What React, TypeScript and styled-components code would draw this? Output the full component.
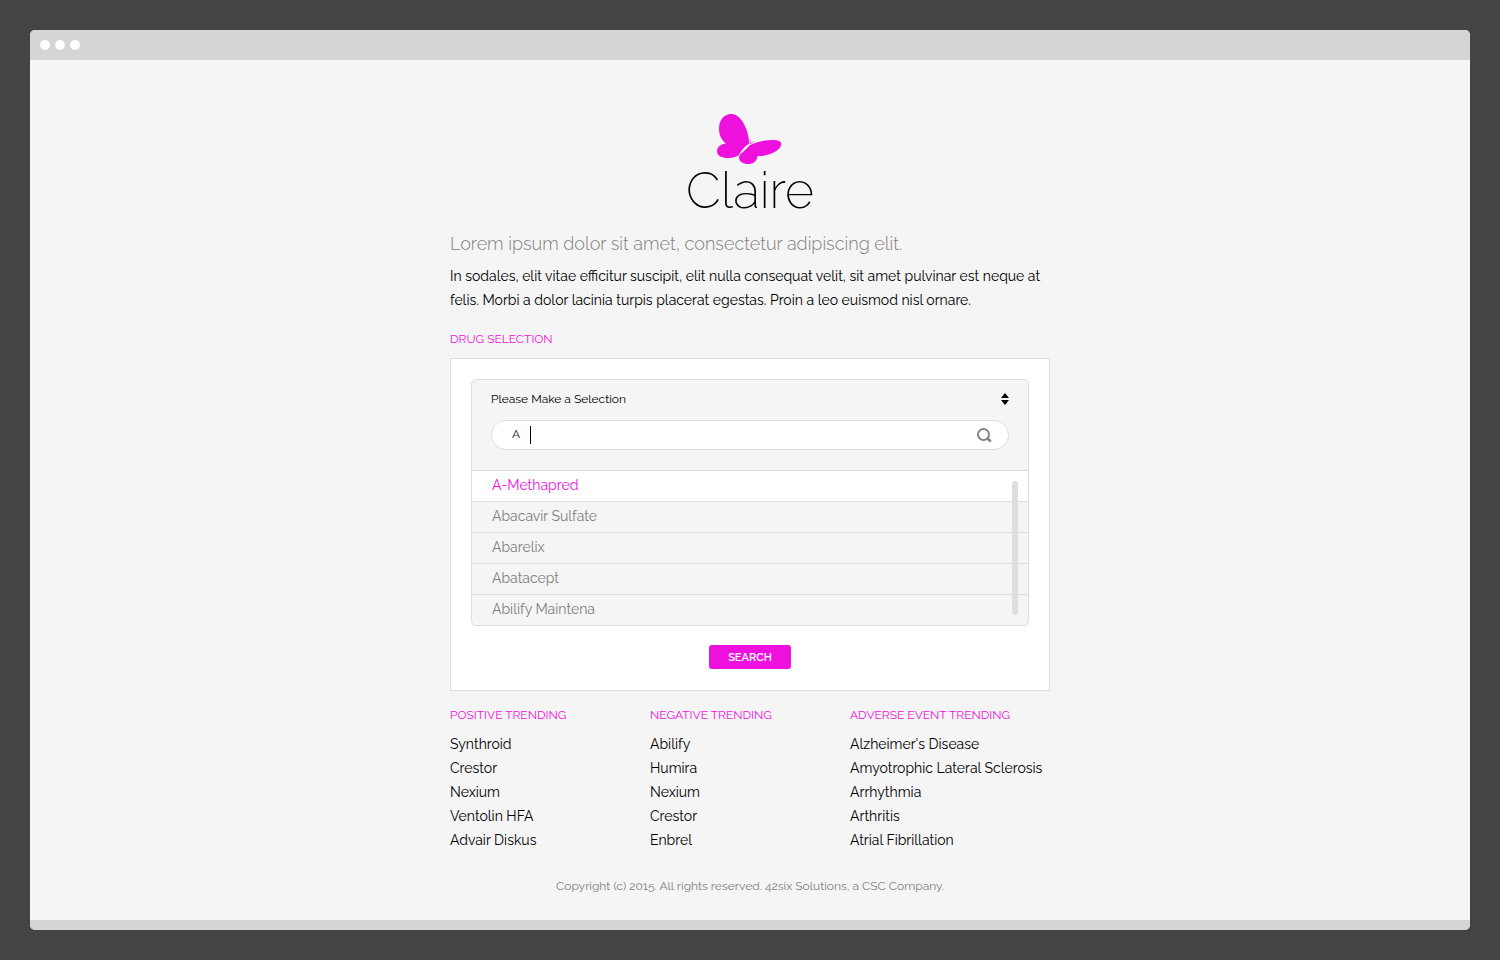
import React, { useState } from "react";
import styled, { createGlobalStyle } from "styled-components";

const pink = "#ee11dd";
const line = "#dedede";
const paper = "#f5f5f5";

const GlobalStyle = createGlobalStyle`
  *, *::before, *::after { box-sizing: border-box; }
  body {
    margin: 0;
    background: #444444;
    color: #000000;
    font-family: Raleway, Lato, sans-serif;
    font-size: 14px;
    line-height: 24px;
  }
  h1, h2, p, ul { margin: 0; padding: 0; }
  ul { list-style: none; }
  input, select, button { font-family: inherit; margin: 0; }
`;

const Desktop = styled.div`
  min-height: 100vh;
  padding: 30px;
  display: flex;
`;

const BrowserWindow = styled.div`
  flex: 1;
  display: flex;
  flex-direction: column;
  border-radius: 5px;
  overflow: hidden;
  background: ${paper};
`;

const TitleBar = styled.div`
  height: 30px;
  padding: 0 10px;
  display: flex;
  align-items: center;
  gap: 5px;
  background: #d5d5d5;
`;

const Dot = styled.span`
  width: 10px;
  height: 10px;
  border-radius: 50%;
  background: #ffffff;
`;

const BottomBar = styled.div`
  height: 10px;
  background: #d5d5d5;
`;

const Page = styled.main`
  flex: 1;
  width: 100%;
  max-width: 640px;
  margin: 0 auto;
  padding: 54px 20px 22px;
`;

const Brand = styled.header`
  display: flex;
  flex-direction: column;
  align-items: center;
  margin-bottom: 14px;
`;

const Butterfly = styled.svg`
  display: block;
  width: 66px;
  height: 50px;
  fill: ${pink};
`;

const BrandName = styled.h1`
  font-size: 50px;
  line-height: 54px;
  font-weight: 200;
`;

const Lead = styled.h2`
  margin-bottom: 8px;
  font-size: 18px;
  line-height: 24px;
  font-weight: 300;
  color: #808080;
`;

const Heading = styled.h2`
  font-size: 12px;
  line-height: 24px;
  font-weight: 400;
  text-transform: uppercase;
  color: ${pink};
`;

const FieldLabel = styled(Heading).attrs({ as: "label" })<{ htmlFor?: string }>`
  display: block;
  margin-top: 15px;
`;

const DrugForm = styled.form`
  margin: 7px 0 12px;
  padding: 20px 20px 21px;
  background: #ffffff;
  border: 1px solid ${line};
`;

const Picker = styled.div`
  margin-bottom: 19px;
  background: ${paper};
  border: 1px solid ${line};
  border-radius: 5px;
  overflow: hidden;
`;

const PickerHead = styled.div`
  padding: 10px 19px 20px;
  display: flex;
  flex-direction: column;
  gap: 10px;
`;

const SelectRow = styled.div`
  display: flex;
  position: relative;
`;

const DrugSelect = styled.select`
  appearance: none;
  flex: 1;
  height: 20px;
  padding: 0 0 2px;
  border: 0;
  background: transparent;
  font-size: 12px;
  line-height: 18px;
  color: #000000;
`;

const SortIcon = styled.svg`
  position: absolute;
  right: 0;
  top: 3px;
  width: 8px;
  height: 12px;
  pointer-events: none;
`;

const SearchField = styled.div`
  position: relative;
  display: flex;
  align-items: center;
  height: 30px;
  padding: 0 16px 0 20px;
  background: #ffffff;
  border: 1px solid ${line};
  border-radius: 15px;
`;

const SearchInput = styled.input`
  flex: 1;
  min-width: 0;
  height: 24px;
  padding: 0 0 2px;
  border: 0;
  outline: 0;
  background: transparent;
  font-size: 12px;
  color: #222222;
`;

const Caret = styled.span`
  position: absolute;
  left: 38px;
  top: 5px;
  width: 1px;
  height: 18px;
  background: #000000;
`;

const SearchIcon = styled.svg`
  width: 15px;
  height: 15px;
  fill: none;
  stroke: #858585;
`;

const ResultsArea = styled.div`
  position: relative;
`;

const Result = styled.li<{ $active: boolean }>`
  height: 31px;
  padding: 0 20px;
  border-top: 1px solid ${line};
  line-height: 28px;
  cursor: pointer;
  background: ${(p) => (p.$active ? "#ffffff" : "transparent")};
  color: ${(p) => (p.$active ? pink : "#808080")};
`;

const ScrollThumb = styled.div`
  position: absolute;
  top: 11px;
  bottom: 10px;
  right: 10px;
  width: 6px;
  border-radius: 3px;
  background: ${line};
`;

const SearchButton = styled.button`
  display: block;
  width: 82px;
  height: 24px;
  margin: 0 auto;
  padding: 0;
  border: 0;
  border-radius: 3px;
  background: ${pink};
  color: #ffffff;
  font-size: 11px;
  font-weight: 600;
  text-transform: uppercase;
`;

const Trends = styled.div`
  display: grid;
  grid-template-columns: repeat(3, minmax(0, 1fr));
`;

const TrendList = styled.ul`
  margin-top: 5px;
`;

const TrendLink = styled.a`
  color: inherit;
  text-decoration: none;
  white-space: nowrap;
`;

const Copyright = styled.footer`
  margin-top: 22px;
  font-size: 12px;
  text-align: center;
  color: #808080;
`;

const drugs = ["A-Methapred", "Abacavir Sulfate", "Abarelix", "Abatacept", "Abilify Maintena"];

const trends = [
  { title: "Positive Trending", items: ["Synthroid", "Crestor", "Nexium", "Ventolin HFA", "Advair Diskus"] },
  { title: "Negative Trending", items: ["Abilify", "Humira", "Nexium", "Crestor", "Enbrel"] },
  {
    title: "Adverse Event Trending",
    items: ["Alzheimer's Disease", "Amyotrophic Lateral Sclerosis", "Arrhythmia", "Arthritis", "Atrial Fibrillation"],
  },
];

export default function App() {
  const [query, setQuery] = useState("A");
  const [active, setActive] = useState(0);

  return (
    <>
      <GlobalStyle />
      <Desktop>
        <BrowserWindow>
          <TitleBar>
            <Dot />
            <Dot />
            <Dot />
          </TitleBar>
          <Page>
            <Brand>
              <Butterfly viewBox="0 0 66 50" aria-hidden="true">
                <path d="M32.3 29.5C32 18 25 0 14.5 0C6.500 0 2 6.500 2 15C2 21.500 5 26.500 9 29.500C4 30 0 33 0 37C0 42 5 44 11 44C16 44 19.500 43 22 41C24 36.500 28 32 32.300 29.500Z" />
                <path d="M33 31C39 28 48 26 56 26C61 26 64.200 27 64.200 30C64.200 36 53 42.500 40.500 42C40 47.500 36 50 31 50C26 50 22 47.500 22 43.500C22 40 28 37 33 31Z" />
                <path d="M33.500 30L33.200 25.500M34 30L36.500 27.500" fill="none" stroke={pink} strokeWidth="0.6" />
              </Butterfly>
              <BrandName>Claire</BrandName>
            </Brand>

            <Lead>Lorem ipsum dolor sit amet, consectetur adipiscing elit.</Lead>
            <p>
              In sodales, elit vitae efficitur suscipit, elit nulla consequat velit, sit amet pulvinar est neque at
              felis. Morbi a dolor lacinia turpis placerat egestas. Proin a leo euismod nisl ornare.
            </p>

            <FieldLabel htmlFor="drug">Drug Selection</FieldLabel>
            <DrugForm onSubmit={(e) => e.preventDefault()}>
              <Picker>
                <PickerHead>
                  <SelectRow>
                    <DrugSelect id="drug" defaultValue="">
                      <option value="">Please Make a Selection</option>
                      {drugs.map((d) => (
                        <option key={d}>{d}</option>
                      ))}
                    </DrugSelect>
                    <SortIcon viewBox="0 0 8 12" aria-hidden="true">
                      <path d="M4 0L8 5H0ZM0 7H8L4 12Z" />
                    </SortIcon>
                  </SelectRow>
                  <SearchField>
                    <SearchInput
                      type="text"
                      aria-label="Filter drugs"
                      value={query}
                      onChange={(e) => setQuery(e.target.value)}
                    />
                    <Caret />
                    <SearchIcon viewBox="0 0 15 15" aria-hidden="true">
                      <circle cx="6.500" cy="6.500" r="5.500" strokeWidth="2" />
                      <path d="M10 10L13.800 13.500" strokeWidth="2.600" />
                    </SearchIcon>
                  </SearchField>
                </PickerHead>
                <ResultsArea>
                  <ul role="listbox" aria-label="Matching drugs">
                    {drugs.map((d, i) => (
                      <Result
                        key={d}
                        role="option"
                        aria-selected={i === active}
                        $active={i === active}
                        onClick={() => setActive(i)}
                      >
                        {d}
                      </Result>
                    ))}
                  </ul>
                  <ScrollThumb />
                </ResultsArea>
              </Picker>
              <SearchButton type="submit">Search</SearchButton>
            </DrugForm>

            <Trends>
              {trends.map((t) => (
                <section key={t.title}>
                  <Heading>{t.title}</Heading>
                  <TrendList>
                    {t.items.map((item) => (
                      <li key={item}>
                        <TrendLink href="#">{item}</TrendLink>
                      </li>
                    ))}
                  </TrendList>
                </section>
              ))}
            </Trends>
            <Copyright>Copyright (c) 2015. All rights reserved. 42six Solutions, a CSC Company.</Copyright>
          </Page>
          <BottomBar />
        </BrowserWindow>
      </Desktop>
    </>
  );
}
